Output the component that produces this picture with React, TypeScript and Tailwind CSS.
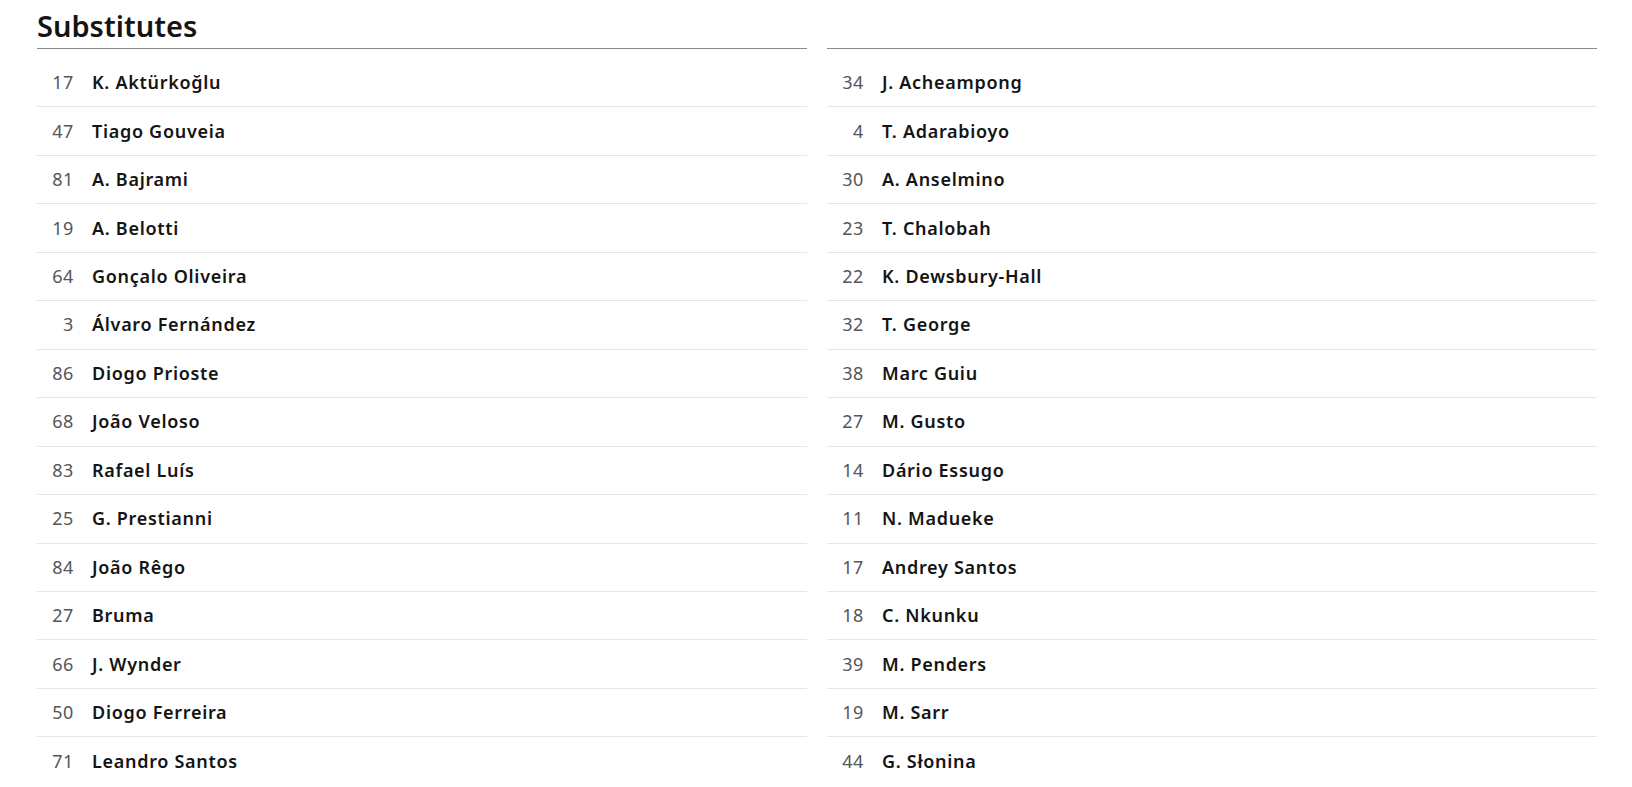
import React from "react";

const left: [string, string][] = [
  ["17", "K. Aktürkoğlu"],
  ["47", "Tiago Gouveia"],
  ["81", "A. Bajrami"],
  ["19", "A. Belotti"],
  ["64", "Gonçalo Oliveira"],
  ["3", "Álvaro Fernández"],
  ["86", "Diogo Prioste"],
  ["68", "João Veloso"],
  ["83", "Rafael Luís"],
  ["25", "G. Prestianni"],
  ["84", "João Rêgo"],
  ["27", "Bruma"],
  ["66", "J. Wynder"],
  ["50", "Diogo Ferreira"],
  ["71", "Leandro Santos"],
];

const right: [string, string][] = [
  ["34", "J. Acheampong"],
  ["4", "T. Adarabioyo"],
  ["30", "A. Anselmino"],
  ["23", "T. Chalobah"],
  ["22", "K. Dewsbury-Hall"],
  ["32", "T. George"],
  ["38", "Marc Guiu"],
  ["27", "M. Gusto"],
  ["14", "Dário Essugo"],
  ["11", "N. Madueke"],
  ["17", "Andrey Santos"],
  ["18", "C. Nkunku"],
  ["39", "M. Penders"],
  ["19", "M. Sarr"],
  ["44", "G. Słonina"],
];

function Column({ title, rows }: { title?: string; rows: [string, string][] }) {
  return (
    <div className="flex flex-col w-[770px]">
      <div className="h-[49px] border-b border-[#8a8a8a] flex items-end">
        {title && (
          <h2 className="text-[29px] leading-none font-semibold text-[#141414] pb-[8px]">
            {title}
          </h2>
        )}
      </div>
      <ul className="pt-[10px]">
        {rows.map(([n, name], i) => (
          <li
            key={i}
            className="h-[48.46px] border-b border-[#e6e6e6] last:border-b-0 flex items-center"
          >
            <span className="w-[37px] text-right text-[18px] tracking-[0.6px] text-[#545658]">{n}</span>
            <span className="ml-[18px] text-[18px] tracking-[0.7px] font-semibold text-[#141414]">{name}</span>
          </li>
        ))}
      </ul>
    </div>
  );
}

export default function App() {
  return (
    <div
      className="bg-white w-[1632px] h-[787px] overflow-hidden pl-[37px] flex gap-[20px]"
      style={{ fontFamily: '"Noto Sans", "Open Sans", sans-serif' }}
    >
      <Column title="Substitutes" rows={left} />
      <Column rows={right} />
    </div>
  );
}
